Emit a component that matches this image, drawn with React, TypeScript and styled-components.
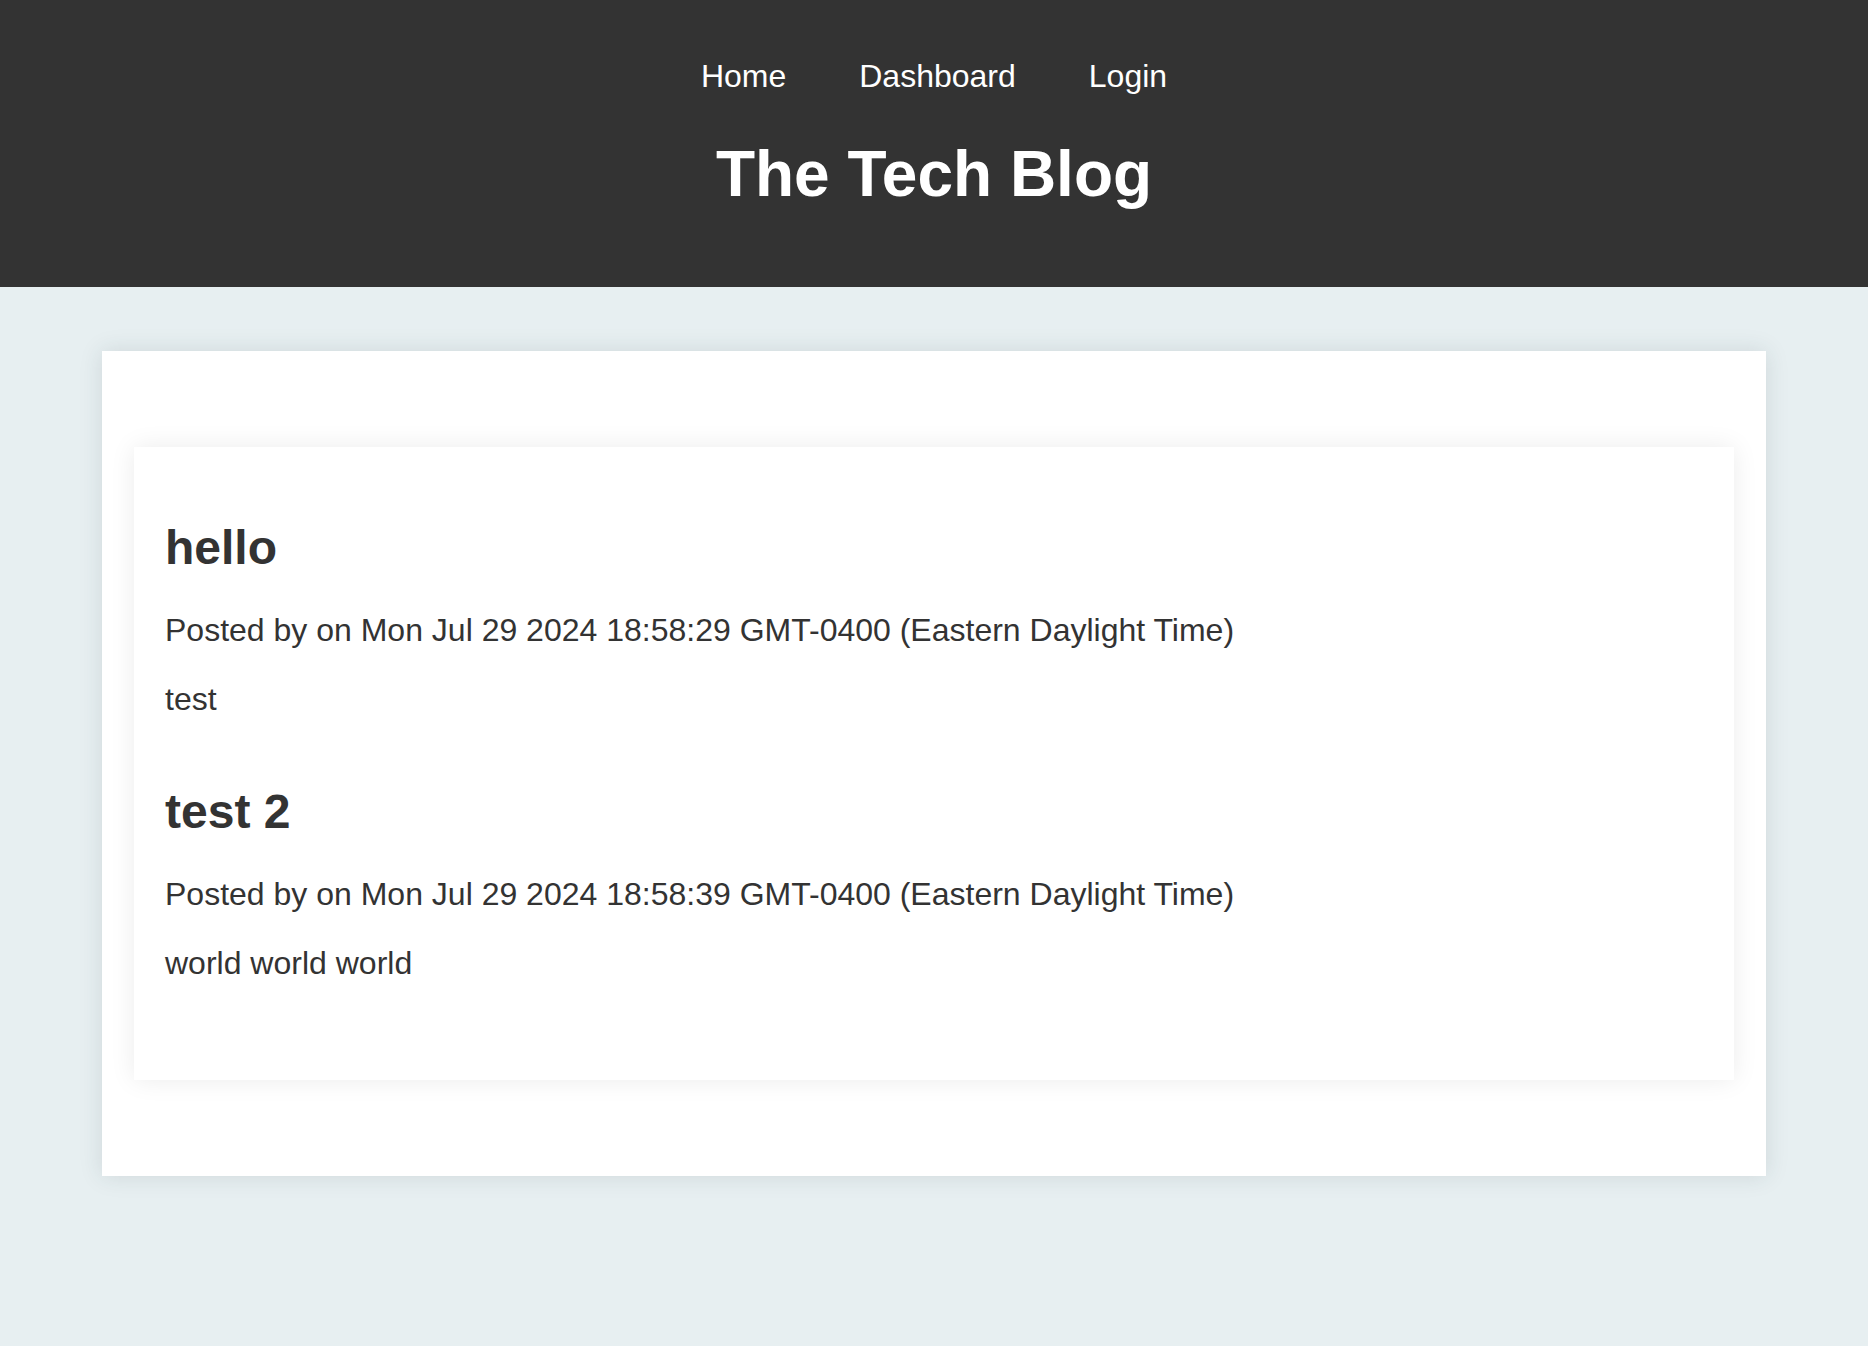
import React from "react";
import styled, { createGlobalStyle } from "styled-components";

const GlobalStyle = createGlobalStyle`
  html, body {
    margin: 0;
    padding: 0;
    background: #e7eff1;
    min-height: 100%;
  }
  body {
    font-family: "Liberation Sans", Arial, Helvetica, sans-serif;
    color: #333333;
  }
  * { box-sizing: border-box; }
`;

const Page = styled.div`
  min-height: 1346px;
  background: #e7eff1;
`;

const Header = styled.header`
  background: #333333;
  color: #ffffff;
  padding: 58px 0 77px;
  display: flex;
  flex-direction: column;
  align-items: center;
`;

const Nav = styled.nav`
  display: flex;
  gap: 73px;
`;

const NavLink = styled.a`
  color: #ffffff;
  text-decoration: none;
  font-size: 32px;
  line-height: 36px;
`;

const Title = styled.h1`
  margin: 44px 0 0;
  font-size: 64px;
  line-height: 72px;
  font-weight: 700;
`;

const Main = styled.main`
  padding: 64px 0;
`;

const OuterCard = styled.section`
  width: 1664px;
  margin: 0 auto;
  background: #ffffff;
  padding: 96px 32px;
  box-shadow: 0 0 22px rgba(40, 60, 70, 0.13);
`;

const PostList = styled.div`
  background: #ffffff;
  padding: 74px 31px 99px;
  display: flex;
  flex-direction: column;
  gap: 68px;
  box-shadow: 0 0 24px rgba(0, 0, 0, 0.08);
`;

const Post = styled.article`
  display: flex;
  flex-direction: column;
`;

const PostTitle = styled.h2`
  margin: 0 0 38px;
  font-size: 48px;
  line-height: 53px;
  font-weight: 700;
  color: #333333;
`;

const PostText = styled.p<{ $gap?: number }>`
  margin: 0;
  margin-bottom: ${(p) => p.$gap ?? 0}px;
  font-size: 32px;
  line-height: 36px;
  color: #333333;
`;

const posts = [
  {
    title: "hello",
    date: "Mon Jul 29 2024 18:58:29 GMT-0400 (Eastern Daylight Time)",
    body: "test",
  },
  {
    title: "test 2",
    date: "Mon Jul 29 2024 18:58:39 GMT-0400 (Eastern Daylight Time)",
    body: "world world world",
  },
];

export default function App() {
  return (
    <Page>
      <GlobalStyle />
      <Header>
        <Nav>
          <NavLink href="#">Home</NavLink>
          <NavLink href="#">Dashboard</NavLink>
          <NavLink href="#">Login</NavLink>
        </Nav>
        <Title>The Tech Blog</Title>
      </Header>
      <Main>
        <OuterCard>
          <PostList>
            {posts.map((post) => (
              <Post key={post.title}>
                <PostTitle>{post.title}</PostTitle>
                <PostText $gap={33}>Posted by on {post.date}</PostText>
                <PostText>{post.body}</PostText>
              </Post>
            ))}
          </PostList>
        </OuterCard>
      </Main>
    </Page>
  );
}
